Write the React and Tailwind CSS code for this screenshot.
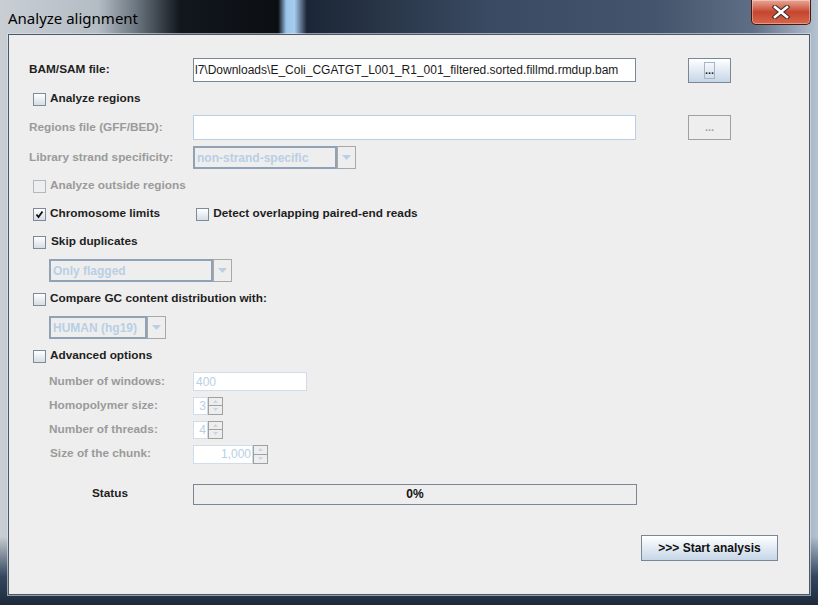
import React from "react";

const F = { fontFamily: '"Liberation Sans", Arial, sans-serif' };

function Check({ checked, disabled }) {
  return (
    <div
      className={`w-[13px] h-[13px] border flex items-center justify-center ${
        disabled
          ? "border-[#b0b8c0] bg-[#eeeeee]"
          : "border-[#7d8a98] bg-gradient-to-b from-[#ffffff] to-[#d6dde6]"
      }`}
    >
      {checked && (
        <svg width="9" height="9" viewBox="0 0 9 9">
          <path d="M1.5 4.5 L3.5 7 L7.5 1.5" stroke="#111" strokeWidth="1.8" fill="none" />
        </svg>
      )}
    </div>
  );
}

function CheckRow({ label, checked, disabled, h, pl = 24, gap = 4 }) {
  return (
    <div className={`flex items-center`} style={{ height: h, paddingLeft: pl }}>
      <Check checked={checked} disabled={disabled} />
      <span
        className={`text-[11.8px] font-bold whitespace-nowrap ${disabled ? "text-[#9a9a9a]" : "text-[#1e1e1e]"}`}
        style={{ marginLeft: gap }}
      >
        {label}
      </span>
    </div>
  );
}

function Combo({ text, boxW, arrowW, h = 23 }) {
  return (
    <div className="flex" style={{ height: h }}>
      <div
        className="border-2 border-[#8fa2b6] bg-[#eeeeee] flex items-center pl-[2px] text-[12px] font-bold text-[#b8cfe5] whitespace-nowrap overflow-hidden"
        style={{ width: boxW }}
      >
        {text}
      </div>
      <div
        className="border border-[#a8a8a8] bg-[#eeeeee] flex items-center justify-center"
        style={{ width: arrowW }}
      >
        <svg width="9" height="5" viewBox="0 0 9 5">
          <path d="M0 0 L9 0 L4.5 5 Z" fill="#b8cfe5" />
        </svg>
      </div>
    </div>
  );
}

function Spinner({ value, fieldW, h }) {
  return (
    <div className="flex" style={{ height: h }}>
      <div
        className="border border-[#d0dcea] bg-white flex items-center justify-end pr-[1px] text-[12px] text-[#b8cfe5]"
        style={{ width: fieldW }}
      >
        {value}
      </div>
      <div className="flex flex-col w-[15px]">
        <div className="flex-1 border border-[#a0a0a0] bg-[#eeeeee] flex items-center justify-center">
          <svg width="5" height="3" viewBox="0 0 5 3">
            <path d="M0 3 L5 3 L2.5 0 Z" fill="#c8d6e4" />
          </svg>
        </div>
        <div className="flex-1 border border-t-0 border-[#a0a0a0] bg-[#eeeeee] flex items-center justify-center">
          <svg width="5" height="3" viewBox="0 0 5 3">
            <path d="M0 0 L5 0 L2.5 3 Z" fill="#c8d6e4" />
          </svg>
        </div>
      </div>
    </div>
  );
}

function Label({ children, disabled, w = 184, pl = 20 }) {
  return (
    <div
      className={`shrink-0 text-[11.8px] font-bold whitespace-nowrap ${disabled ? "text-[#9a9a9a]" : "text-[#1e1e1e]"}`}
      style={{ width: w, paddingLeft: pl }}
    >
      {children}
    </div>
  );
}

export default function App() {
  return (
    <div
      className="w-[818px] h-[605px] flex flex-col overflow-hidden relative"
      style={{
        ...F,
        background:
          "linear-gradient(90deg,#c8ced4 0%,#b4bcc4 12%,#66707a 17%,#12171d 22%,#0b0f14 34%,#9cc4ea 35%,#a8ccee 36%,#1c2636 37.5%,#2a384a 48%,#3a4a62 60%,#44546c 80%,#5e6e84 92%,#b4c2d0 100%)",
      }}
    >
      {/* title bar */}
      <div className="h-[34px] flex items-center pl-[8px] relative shrink-0">
        <span
          className="text-[15px] text-black pt-[2px]"
          style={{ fontFamily: '"Noto Sans", "Open Sans", sans-serif' }}
        >
          Analyze alignment
        </span>
        <div className="absolute top-0 right-[7px] w-[60px] h-[25px] rounded-b-[5px] border border-t-0 border-[#4a1810] bg-gradient-to-b from-[#e9a796] via-[#c4452e] to-[#d8664a] flex items-center justify-center shadow-[inset_0_0_0_1px_rgba(255,255,255,0.35)]">
          <svg width="18" height="14" viewBox="0 0 18 14">
            <path d="M3 2 L15 12 M15 2 L3 12" stroke="#3a2a28" strokeWidth="4.5" strokeLinecap="square" />
            <path d="M3 2 L15 12 M15 2 L3 12" stroke="#ffffff" strokeWidth="2.6" strokeLinecap="square" />
          </svg>
        </div>
      </div>

      {/* body with side frames */}
      <div
        className="flex-1 flex px-[8px] pb-[10px]"
        style={{
          background:
            "linear-gradient(180deg, transparent 0%, transparent 88%, #34465e 95%, #1e2a3a 100%)",
        }}
      >
        <div className="flex-1 border border-[#4d5865] bg-[#eeeeee] flex flex-col pt-[21px] shadow-[0_0_0_1px_rgba(220,230,240,0.6)]">
          {/* Row 1 */}
          <div className="flex items-center h-[28px]">
            <Label>BAM/SAM file:</Label>
            <div className="w-[443px] h-[24px] border border-[#7a8796] bg-white flex items-center pl-[1px] overflow-hidden whitespace-nowrap text-[12px] text-[#1a1a1a]">
              l7\Downloads\E_Coli_CGATGT_L001_R1_001_filtered.sorted.fillmd.rmdup.bam
            </div>
            <div className="ml-[52px] w-[43px] h-[25px] border border-[#7a8796] bg-gradient-to-b from-[#ffffff] to-[#c6d6e8] flex items-center justify-center">
              <div className="w-[11px] h-[17px] border border-[#a6b6c8] flex items-end justify-center pb-[2px] text-[11px] font-bold leading-none text-[#222]">
                ...
              </div>
            </div>
          </div>
          {/* Row 2 */}
          <CheckRow label="Analyze regions" h={30} />
          {/* Row 3 */}
          <div className="flex items-center h-[27px]">
            <Label disabled>Regions file (GFF/BED):</Label>
            <div className="w-[443px] h-[25px] border border-[#b8cfe5] bg-white" />
            <div className="ml-[52px] w-[43px] h-[25px] border border-[#a0a0a0] bg-[#eeeeee] flex items-center justify-center text-[11px] text-[#a0a0a0] font-bold">
              ...
            </div>
          </div>
          {/* Row 4 */}
          <div className="flex items-center h-[33px]">
            <Label disabled>Library strand specificity:</Label>
            <Combo text="non-strand-specific" boxW={144} arrowW={19} />
          </div>
          {/* Row 5 */}
          <CheckRow label="Analyze outside regions" disabled h={24} />
          {/* Row 6 */}
          <div className="flex items-center h-[32px]">
            <CheckRow label="Chromosome limits" checked h={32} />
            <div className="ml-[36px]">
              <CheckRow label="Detect overlapping paired-end reads" h={32} pl={0} />
            </div>
          </div>
          {/* Row 7 */}
          <CheckRow label="Skip duplicates" h={24} gap={5} />
          {/* Row 8 */}
          <div className="flex items-center h-[33px] pl-[40px]">
            <Combo text="Only flagged" boxW={164} arrowW={19} />
          </div>
          {/* Row 9 */}
          <CheckRow label="Compare GC content distribution with:" h={24} />
          {/* Row 10 */}
          <div className="flex items-center h-[33px] pl-[40px]">
            <Combo text="HUMAN (hg19)" boxW={98} arrowW={19} />
          </div>
          {/* Row 11 */}
          <CheckRow label="Advanced options" h={24} />
          {/* Row 12 */}
          <div className="flex items-center h-[27px]">
            <Label disabled pl={40}>Number of windows:</Label>
            <div className="w-[114px] h-[19px] border border-[#d0dcea] bg-white flex items-center pl-[2px] text-[12px] text-[#b8cfe5]">
              400
            </div>
          </div>
          {/* Row 13 */}
          <div className="flex items-center h-[21px]">
            <Label disabled pl={40}>Homopolymer size:</Label>
            <Spinner value="3" fieldW={15} h={18} />
          </div>
          {/* Row 14 */}
          <div className="flex items-center h-[27px]">
            <Label disabled pl={40}>Number of threads:</Label>
            <Spinner value="4" fieldW={15} h={18} />
          </div>
          {/* Row 15 */}
          <div className="flex items-center h-[22px]">
            <Label disabled pl={41}>Size of the chunk:</Label>
            <Spinner value="1,000" fieldW={60} h={19} />
          </div>
          {/* Row 16 */}
          <div className="flex items-center h-[58px]">
            <Label pl={83}>Status</Label>
            <div className="w-[444px] h-[21px] border border-[#7a8796] bg-[#eeeeee] flex items-center justify-center text-[12px] font-bold text-[#111]">
              0%
            </div>
          </div>
          {/* Row 17 */}
          <div className="flex items-center h-[49px] pl-[632px]">
            <div className="w-[137px] h-[26px] border border-[#7a8796] bg-gradient-to-b from-[#ffffff] to-[#c6d6e8] flex items-center justify-center text-[12px] font-bold text-[#111] whitespace-nowrap">
              &gt;&gt;&gt; Start analysis
            </div>
          </div>
        </div>
      </div>
    </div>
  );
}
